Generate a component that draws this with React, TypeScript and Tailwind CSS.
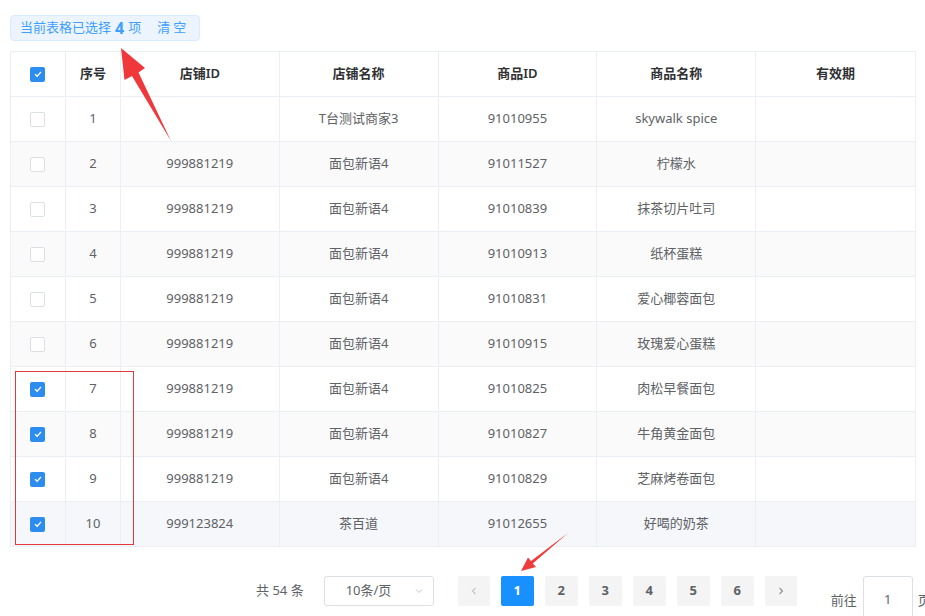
import React from "react";

interface Row {
  no: number;
  shopId: string;
  shopName: string;
  goodsId: string;
  goodsName: string;
  checked: boolean;
}

const rows: Row[] = [
  { no: 1, shopId: "", shopName: "T台测试商家3", goodsId: "91010955", goodsName: "skywalk spice", checked: false },
  { no: 2, shopId: "999881219", shopName: "面包新语4", goodsId: "91011527", goodsName: "柠檬水", checked: false },
  { no: 3, shopId: "999881219", shopName: "面包新语4", goodsId: "91010839", goodsName: "抹茶切片吐司", checked: false },
  { no: 4, shopId: "999881219", shopName: "面包新语4", goodsId: "91010913", goodsName: "纸杯蛋糕", checked: false },
  { no: 5, shopId: "999881219", shopName: "面包新语4", goodsId: "91010831", goodsName: "爱心椰蓉面包", checked: false },
  { no: 6, shopId: "999881219", shopName: "面包新语4", goodsId: "91010915", goodsName: "玫瑰爱心蛋糕", checked: false },
  { no: 7, shopId: "999881219", shopName: "面包新语4", goodsId: "91010825", goodsName: "肉松早餐面包", checked: true },
  { no: 8, shopId: "999881219", shopName: "面包新语4", goodsId: "91010827", goodsName: "牛角黄金面包", checked: true },
  { no: 9, shopId: "999881219", shopName: "面包新语4", goodsId: "91010829", goodsName: "芝麻烤卷面包", checked: true },
  { no: 10, shopId: "999123824", shopName: "茶百道", goodsId: "91012655", goodsName: "好喝的奶茶", checked: true },
];

const font = { fontFamily: '"Noto Sans", "Noto Sans CJK SC", sans-serif' };

function Box({ checked }: { checked: boolean }) {
  if (checked) {
    return (
      <span className="w-[15px] h-[15px] rounded-[2px] bg-[#2d8cf0] flex items-center justify-center">
        <svg width="10" height="10" viewBox="0 0 10 10">
          <path d="M2 5.2 L4.2 7.2 L8 2.8" stroke="white" strokeWidth="1.3" fill="none" />
        </svg>
      </span>
    );
  }
  return <span className="w-[15px] h-[15px] rounded-[2px] border border-[#dcdfe6] bg-white" />;
}

const cell = "border-r border-[#ebeef5] flex items-center justify-center";

export default function App() {
  const pages = [1, 2, 3, 4, 5, 6];
  return (
    <div className="relative w-[925px] h-[616px] overflow-hidden bg-white text-[13px]" style={font}>
      <div className="pt-[15px] px-[10px]">
        <div className="w-[190px] h-[26px] rounded-[4px] bg-[#ecf5ff] border border-[#d9ecff] flex items-center pl-[9px] text-[#409eff] text-[13px]">
          <span>当前表格已选择</span>
          <span className="mx-[4px] text-[16px] font-bold leading-none">4</span>
          <span>项</span>
          <span className="ml-[16px] tracking-[3px]">清空</span>
        </div>

        <div className="mt-[10px] w-[906px] border-l border-t border-[#ebeef5]">
          <div className="flex h-[45px] border-b border-[#ebeef5] text-[#303133] font-semibold">
            <div className={`${cell} w-[55px]`}><Box checked /></div>
            <div className={`${cell} w-[55px]`}>序号</div>
            <div className={`${cell} w-[159px]`}>店铺ID</div>
            <div className={`${cell} w-[159px]`}>店铺名称</div>
            <div className={`${cell} w-[159px]`}>商品ID</div>
            <div className={`${cell} w-[159px]`}>商品名称</div>
            <div className={`${cell} w-[160px]`}>有效期</div>
          </div>
          {rows.map((r) => (
            <div
              key={r.no}
              className={`flex h-[45px] border-b border-[#ebeef5] text-[#606266] ${
                r.no === 10 ? "bg-[#f5f7fa]" : r.no % 2 === 0 ? "bg-[#fafafa]" : "bg-white"
              }`}
            >
              <div className={`${cell} w-[55px]`}><Box checked={r.checked} /></div>
              <div className={`${cell} w-[55px]`}>{r.no}</div>
              <div className={`${cell} w-[159px]`}>{r.shopId}</div>
              <div className={`${cell} w-[159px]`}>{r.shopName}</div>
              <div className={`${cell} w-[159px]`}>{r.goodsId}</div>
              <div className={`${cell} w-[159px]`}>{r.goodsName}</div>
              <div className={`${cell} w-[160px]`}></div>
            </div>
          ))}
        </div>

        <div className="mt-[29px] w-max flex items-start pl-[246px] text-[#606266] whitespace-nowrap">
          <span className="shrink-0 h-[30px] flex items-center">共 54 条</span>
          <div className="shrink-0 ml-[20px] w-[110px] h-[30px] border border-[#dcdfe6] rounded-[3px] flex items-center justify-between pl-[21px] pr-[9px]">
            <span>10条/页</span>
            <svg width="10" height="10" viewBox="0 0 10 10">
              <path d="M2 3.5 L5 6.5 L8 3.5" stroke="#c0c4cc" strokeWidth="1" fill="none" />
            </svg>
          </div>
          <div className="shrink-0 ml-[24px] flex gap-[11px]">
            <button className="w-[32px] h-[30px] rounded-[2px] bg-[#f4f4f5] flex items-center justify-center">
              <svg width="10" height="10" viewBox="0 0 10 10">
                <path d="M6.5 2 L3.5 5 L6.5 8" stroke="#c0c4cc" strokeWidth="1.2" fill="none" />
              </svg>
            </button>
            {pages.map((p) => (
              <button
                key={p}
                className={`w-[33px] h-[30px] rounded-[2px] font-bold flex items-center justify-center ${
                  p === 1 ? "bg-[#1890ff] text-white" : "bg-[#f4f4f5] text-[#606266]"
                }`}
              >
                {p}
              </button>
            ))}
            <button className="w-[32px] h-[30px] rounded-[2px] bg-[#f4f4f5] flex items-center justify-center">
              <svg width="10" height="10" viewBox="0 0 10 10">
                <path d="M3.5 2 L6.5 5 L3.5 8" stroke="#909399" strokeWidth="1.2" fill="none" />
              </svg>
            </button>
          </div>
          <span className="shrink-0 ml-[34px] mt-[15px] h-[20px] flex items-center">前往</span>
          <div className="shrink-0 ml-[6px] w-[50px] h-[48px] border border-[#dcdfe6] rounded-[3px] flex items-center justify-center">1</div>
          <span className="shrink-0 ml-[5px] mt-[15px] h-[20px] flex items-center">页</span>
        </div>
      </div>

      {/* annotations */}
      <div className="absolute left-[15px] top-[371px] w-[119px] h-[174px] border border-[#e2383a]" />
      <svg className="absolute left-0 top-0 pointer-events-none" width="925" height="616">
        <polygon
          points="121,48 145,68 138.5,72.5 171,141 132,76 124.5,80"
          fill="#f0373a"
        />
        <polygon
          points="521,571 528,557.5 531,561 568,533 532.8,563.4 536,567"
          fill="#ee3b3b"
        />
      </svg>
    </div>
  );
}
